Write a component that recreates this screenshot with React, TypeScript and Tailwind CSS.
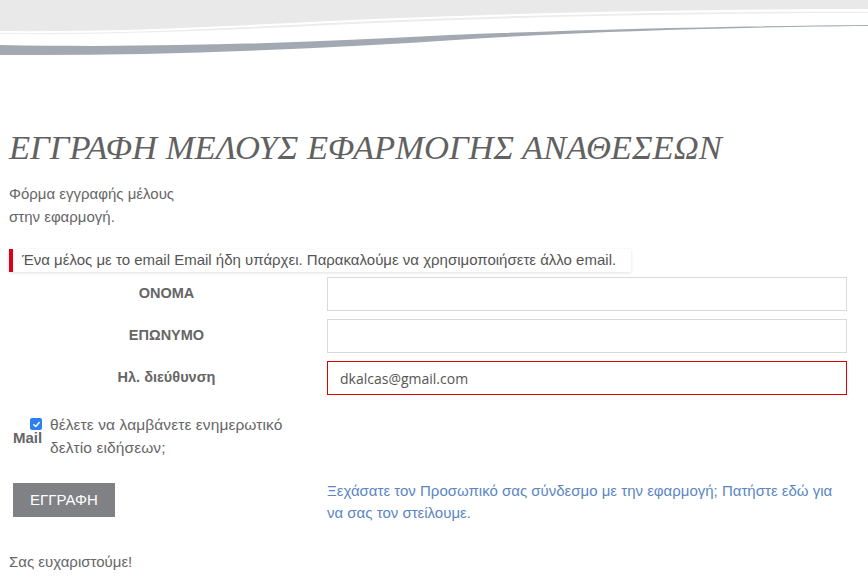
import React from "react";

function Wave() {
  return (
    <svg width="868" height="60" viewBox="0 0 868 60" className="block">
      <path d="M0 0 H868 V9 C720 9 520 12 330 21 C210 27 110 32 0 31 Z" fill="#e9e9e9" />
      <path d="M0 33 C110 34 210 29 330 23 C520 14 720 11 868 12 L868 13 C720 13 520 16 330 25 C210 31 110 35 0 34 Z" fill="#ececec" />
      <path d="M0 45 C160 48 300 43 450 35 C600 29 750 26 868 25 L868 26 C760 27 620 30 470 39 C320 49 160 56 0 55 Z" fill="#a2a9b2" />
    </svg>
  );
}

export default function App() {
  const sans = { fontFamily: "'Liberation Sans', Arial, sans-serif" } as React.CSSProperties;
  return (
    <div className="w-[868px] h-[584px] bg-white overflow-hidden text-[#666]" style={sans}>
      <Wave />
      <div className="pl-[9px] pt-[67px]">
        <h1
          className="text-[34.6px] italic leading-[40px] text-[#616161]"
          style={{ fontFamily: "'Liberation Serif', serif" }}
        >
          ΕΓΓΡΑΦΗ ΜΕΛΟΥΣ ΕΦΑΡΜΟΓΗΣ ΑΝΑΘΕΣΕΩΝ
        </h1>
        <p className="mt-[15px] text-[15px] leading-[23px] text-[#666]">
          Φόρμα εγγραφής μέλους
          <br />
          στην εφαρμογή.
        </p>
      </div>
      <div className="ml-[9px] mt-[21px] w-[622px] border-l-4 border-[#e0001a] shadow-[0_1px_3px_rgba(0,0,0,0.12)] pl-[9px] h-[23px] flex items-center text-[15px] text-[#555]">
        Ένα μέλος με το email Email ήδη υπάρχει. Παρακαλούμε να χρησιμοποιήσετε άλλο email.
      </div>
      <div className="mt-[5px] flex flex-col gap-[8px]">
        {[
          { l: "ΟΝΟΜΑ", v: "", err: false },
          { l: "ΕΠΩΝΥΜΟ", v: "", err: false },
          { l: "Ηλ. διεύθυνση", v: "dkalcas@gmail.com", err: true },
        ].map((r) => (
          <div key={r.l} className="flex items-center">
            <div className="w-[307px] ml-[13px] text-center text-[14.5px] font-bold text-[#666]">
              {r.l}
            </div>
            <div
              className={`ml-[7px] w-[520px] h-[34px] border flex items-center px-[12px] text-[14px] text-[#555] ${
                r.err ? "border-[#e00000]" : "border-[#d9d9d9]"
              }`}
              style={{ fontFamily: "'Open Sans', sans-serif" }}
            >
              {r.v}
            </div>
          </div>
        ))}
      </div>
      <div className="mt-[23px] flex items-start pl-[13px]">
        <span className="mt-[10px] text-[15px] font-bold text-[#666] w-[30px] leading-[20px]">Mail</span>
        <span className="mt-[0px] ml-[-13px] w-[12px] h-[12px] rounded-[2px] bg-[#2f7ff0] flex items-center justify-center">
          <svg width="9" height="9" viewBox="0 0 10 10">
            <path d="M2 5.2 L4.2 7.3 L8 2.8" stroke="white" strokeWidth="1.6" fill="none" strokeLinecap="round" strokeLinejoin="round" />
          </svg>
        </span>
        <span className="ml-[8px] text-[15.5px] tracking-[0.1px] leading-[23px] text-[#666] mt-[-5px]">
          θέλετε να λαμβάνετε ενημερωτικό
          <br />
          δελτίο ειδήσεων;
        </span>
      </div>
      <div className="mt-[24px] flex items-start">
        <div className="ml-[13px] w-[102px] h-[34px] bg-[#808185] text-white text-[15px] flex items-center justify-center">
          ΕΓΓΡΑΦΗ
        </div>
        <div className="ml-[212px] w-[520px] text-[15px] leading-[22px] text-[#5b86c4] mt-[-3px]">
          Ξεχάσατε τον Προσωπικό σας σύνδεσμο με την εφαρμογή; Πατήστε εδώ για να σας τον στείλουμε.
        </div>
      </div>
      <p className="pl-[9px] mt-[27px] text-[15px] text-[#666]">Σας ευχαριστούμε!</p>
    </div>
  );
}
